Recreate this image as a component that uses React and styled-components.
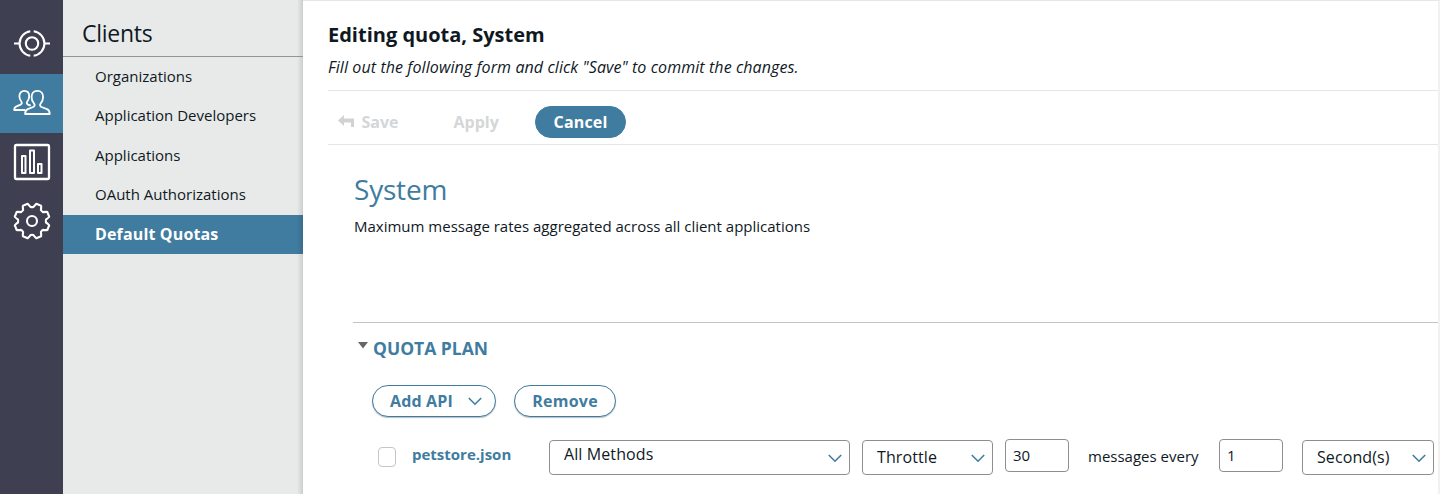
import React from "react";
import styled, { createGlobalStyle, css } from "styled-components";

const blue = "#407ca0";

const GlobalStyle = createGlobalStyle`
  * { box-sizing: border-box; }
  body {
    margin: 0;
    background: #fff;
    color: #0f191f;
    font-family: "Open Sans", "Noto Sans", sans-serif;
    font-size: 15px;
    overflow: hidden;
  }
  button, input { font-family: inherit; color: inherit; }
  h1, h2, h3, p { margin: 0; font-weight: 400; }
`;

const Page = styled.div`
  display: flex;
  width: 1440px;
  height: 494px;
`;

const Rail = styled.nav`
  display: flex;
  flex-direction: column;
  flex: none;
  width: 63px;
  padding-top: 15px;
  background: #3e4051;
`;

const RailItem = styled.a`
  display: flex;
  align-items: flex-start;
  height: 59px;
  padding: 10px 0 0 13px;
  background: ${(p) => (p.$active ? blue : "transparent")};

  svg {
    display: block;
    overflow: visible;
    fill: none;
    stroke: #fff;
    stroke-width: 2.1;
    stroke-linejoin: round;
  }
`;

const Sidebar = styled.aside`
  flex: none;
  width: 240px;
  background: linear-gradient(to right, transparent 234px, rgba(0, 0, 0, 0.12) 240px) #e8eae9;
`;

const SidebarTitle = styled.h2`
  height: 57px;
  padding: 17px 0 0 19px;
  border-bottom: 1px solid #929494;
  font-size: 23px;
  line-height: 32px;
  letter-spacing: -0.25px;
`;

const MenuItem = styled.a`
  display: block;
  height: 39.4px;
  padding-left: 32px;
  line-height: 39px;
  ${(p) =>
    p.$active &&
    css`
      background: linear-gradient(to right, transparent 234px, rgba(0, 0, 0, 0.12) 240px) ${blue};
      color: #fff;
      font-size: 16px;
      font-weight: 700;
      letter-spacing: 0.15px;
    `}
`;

const Main = styled.main`
  flex: 1;
  min-width: 0;
  border-top: 1px solid #e6e6e6;
  border-right: 2px solid #f1f1f1;
  padding-left: 25px;
`;

const Header = styled.header`
  height: 90px;
  padding-top: 20px;
  border-bottom: 1px solid #e6e6e6;
`;

const PageTitle = styled.h1`
  font-size: 20px;
  font-weight: 700;
  line-height: 28px;
`;

const Hint = styled.p`
  padding-top: 6px;
  font-size: 16px;
  font-style: italic;
  line-height: 24px;
  letter-spacing: 0.09px;
`;

const Toolbar = styled.div`
  display: flex;
  align-items: flex-start;
  height: 54px;
  padding: 15px 0 0 10px;
  border-bottom: 1px solid #e6e6e6;
`;

const Button = styled.button`
  display: flex;
  align-items: center;
  justify-content: center;
  gap: ${(p) => p.$gap || 0}px;
  width: ${(p) => p.$width}px;
  height: 32px;
  padding: 0 0 0 ${(p) => p.$indent || 0}px;
  border: 1px solid ${blue};
  border-radius: 16px;
  background: ${(p) => (p.$primary ? blue : "#fff")};
  color: ${(p) => (p.$primary ? "#fff" : blue)};
  box-shadow: ${(p) => (p.$primary ? "none" : "0 1px 1px rgba(60, 70, 80, 0.35)")};
  font-size: 16px;
  font-weight: 700;
  line-height: 30px;
  letter-spacing: ${(p) => p.$spacing || 0}px;
`;

const FlatButton = styled(Button)`
  justify-content: flex-start;
  border: 0;
  background: transparent;
  box-shadow: none;
  color: #d4d6d8;
  margin-right: ${(p) => p.$after}px;

  svg { margin-top: -2px; }
`;

const Summary = styled.section`
  height: 177px;
  padding: 23px 0 0 26px;
`;

const SummaryTitle = styled.h2`
  color: ${blue};
  font-size: 28px;
  line-height: 42px;
  letter-spacing: -0.2px;
`;

const SummaryText = styled.p`
  padding-top: 5px;
  line-height: 22px;
`;

const Plan = styled.section`
  margin-left: 25px;
  border-top: 1px solid #c4c4c4;
`;

const PlanTitle = styled.h3`
  display: flex;
  gap: 5px;
  height: 62px;
  padding: 12px 0 0 5px;
  color: ${blue};
  font-size: 17.5px;
  font-weight: 700;
  line-height: 27px;

  svg { margin-top: 7px; }
`;

const Actions = styled.div`
  display: flex;
  gap: 18px;
  padding-left: 19px;
`;

const QuotaRow = styled.div`
  display: flex;
  align-items: flex-start;
  padding: 22px 0 0 25px;
`;

const Checkbox = styled.span`
  width: 18px;
  height: 20px;
  margin-top: 8px;
  border: 1px solid #c6c6c6;
  border-radius: 4px;
`;

const ApiName = styled.span`
  width: 137px;
  margin: 3px 0 0 16px;
  color: ${blue};
  font-weight: 700;
  line-height: 24px;
`;

const Select = styled.div`
  display: flex;
  justify-content: space-between;
  width: ${(p) => p.$width}px;
  height: 35px;
  margin: 1px ${(p) => p.$after || 0}px 0 ${(p) => p.$before || 0}px;
  padding: ${(p) => p.$top}px 7px 0 14px;
  border: 1px solid #8e8e90;
  border-radius: 4px;
  font-size: 16px;
  line-height: 24px;
  letter-spacing: 0.1px;

  svg { margin-top: ${(p) => 13 - p.$top}px; }
`;

const NumberField = styled.input`
  width: 64px;
  height: 33px;
  padding: 0 0 1px 7px;
  border: 1px solid #8e8e90;
  border-radius: 4px;
  outline: 0;
  font-size: 15px;
`;

const Every = styled.span`
  width: 150px;
  padding: 5px 0 0 19px;
  line-height: 24px;
  white-space: nowrap;
`;

const Chevron = () => (
  <svg width="14" height="9" viewBox="0 0 14 9" fill="none" stroke={blue} strokeWidth="1.6">
    <path d="M.8 1l6.200 6.200L13.200 1" />
  </svg>
);

const gearPath = (() => {
  const points = [];
  for (let i = 0; i < 8; i++) {
    const at = (r, deg) => {
      const a = ((i * 45 + deg) * Math.PI) / 180;
      return `${(19 + r * Math.sin(a)).toFixed(2)} ${(19 - r * Math.cos(a)).toFixed(2)}`;
    };
    points.push(`${i ? "L" : "M"}${at(14.1, -6)}Q${at(13.7, 0)} ${at(14.1, 6)}`);
    points.push(`Q${at(15.3, 8)} ${at(17.3, 13)}Q${at(18.2, 15)} ${at(17.6, 18)}`);
    points.push(`L${at(17.6, 27)}Q${at(18.2, 30)} ${at(17.3, 32)}Q${at(15.3, 37)} ${at(14.1, 39)}`);
  }
  return points.join("") + "Z";
})();

const TargetIcon = () => (
  <svg width="38" height="38" viewBox="0 0 38 38">
    <circle cx="19" cy="18.500" r="6.200" />
    <path d="M17.300 6.300A12.300 12.300 0 0 0 17.300 30.700M20.700 6.300A12.300 12.300 0 0 1 20.700 30.700M1 18.500H6.500M31.500 18.500h5.500" />
  </svg>
);

const PeopleIcon = () => (
  <svg width="38" height="38" viewBox="0 0 38 38">
    <g strokeWidth="1.800">
      <path d="M24.300 6.800c-3.700 0-5.700 2.800-5.700 6.200 0 3.200 1.100 5.300 2.500 6.700 1 1.100.5 2.700-.9 3.300l-5.400 2.200c-2 .8-2.700 2.400-2.700 4.800h24.600c0-2.400-.7-4-2.700-4.800L28.500 23c-1.400-.6-1.900-2.200-.9-3.300 1.400-1.400 2.500-3.500 2.500-6.700 0-3.400-2-6.200-5.800-6.200z" />
      <path d="M12.200 26H1.200c0-1.900.5-3 2.300-3.700l4.100-1.700c1.400-.6 1.600-1.800.8-2.900-1-1.200-2-3-2-5.500 0-3.200 1.900-5.400 4.900-5.400s4.900 2.200 4.900 5.400c0 2.500-1 4.300-2 5.500-.8 1.100-.6 2.300.8 2.900l2.700 1.100" />
    </g>
  </svg>
);

const ChartIcon = () => (
  <svg width="38" height="38" viewBox="0 0 38 38">
    <rect x="2" y="2" width="34" height="34" rx="1.500" strokeWidth="2.300" />
    <path strokeWidth="2" d="M9 13h3.500v17H9zM17 7.500h4V30h-4zM25 21h3.500v9H25z" />
  </svg>
);

const GearIcon = () => (
  <svg width="38" height="38" viewBox="0 0 38 38">
    <path d={gearPath} />
    <circle cx="19" cy="19" r="5" />
  </svg>
);

const ReplyIcon = () => (
  <svg width="16" height="13" viewBox="0 0 16 13" fill="#d2d2d4">
    <path d="M0 5.500L6 0v3.500h10V12h-3V7.500H6V11z" />
  </svg>
);

const menu = [
  { label: "Organizations" },
  { label: "Application Developers" },
  { label: "Applications" },
  { label: "OAuth Authorizations" },
  { label: "Default Quotas", active: true },
];

export default function App() {
  return (
    <>
      <GlobalStyle />
      <Page>
        <Rail>
          <RailItem><TargetIcon /></RailItem>
          <RailItem $active><PeopleIcon /></RailItem>
          <RailItem><ChartIcon /></RailItem>
          <RailItem><GearIcon /></RailItem>
        </Rail>
        <Sidebar>
          <SidebarTitle>Clients</SidebarTitle>
          {menu.map((m) => (
            <MenuItem key={m.label} $active={m.active}>{m.label}</MenuItem>
          ))}
        </Sidebar>
        <Main>
          <Header>
            <PageTitle>Editing quota, System</PageTitle>
            <Hint>Fill out the following form and click "Save" to commit the changes.</Hint>
          </Header>
          <Toolbar>
            <FlatButton $width={63} $gap={7.5} $after={52.5}><ReplyIcon />Save</FlatButton>
            <FlatButton $width={46} $after={35.5}>Apply</FlatButton>
            <Button $primary $width={91} $spacing={0.15}>Cancel</Button>
          </Toolbar>
          <Summary>
            <SummaryTitle>System</SummaryTitle>
            <SummaryText>Maximum message rates aggregated across all client applications</SummaryText>
          </Summary>
          <Plan>
            <PlanTitle>
              <svg width="10" height="7" viewBox="0 0 10 7" fill="#666"><path d="M0 0h10L5 6.500z" /></svg>
              QUOTA PLAN
            </PlanTitle>
            <Actions>
              <Button $width={124} $gap={15} $indent={4} $spacing={0.15}>Add API<Chevron /></Button>
              <Button $width={102} $spacing={0.25}>Remove</Button>
            </Actions>
            <QuotaRow>
              <Checkbox />
              <ApiName>petstore.json</ApiName>
              <Select $width={301} $after={12} $top={1}>All Methods<Chevron /></Select>
              <Select $width={131} $after={12} $top={4}>Throttle<Chevron /></Select>
              <NumberField defaultValue="30" />
              <Every>messages every</Every>
              <NumberField defaultValue="1" />
              <Select $width={132} $before={19} $top={4}>Second(s)<Chevron /></Select>
            </QuotaRow>
          </Plan>
        </Main>
      </Page>
    </>
  );
}
